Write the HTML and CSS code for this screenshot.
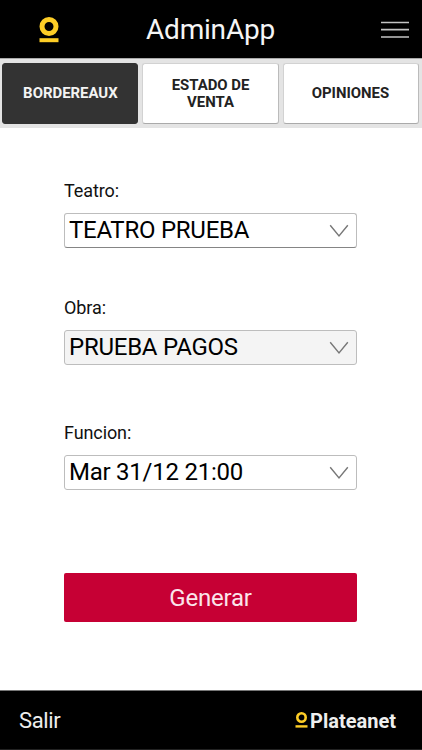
FILE: index.html
```html
<!DOCTYPE html>
<html lang="es">
<head>
<meta charset="utf-8">
<title>AdminApp</title>
<link rel="stylesheet" href="styles.css">
</head>
<body>
<div class="app">
  <header class="header">
    <svg class="logo" width="20" height="26" viewBox="0 0 20 26"><circle cx="10" cy="9.500" r="7" fill="none" stroke="#fdcd26" stroke-width="5"/><path d="M.5 21.200h19v4H.5z" fill="#fdcd26"/></svg>
    <h1 class="title"><span>AdminApp</span></h1>
    <svg class="menu" width="28" height="18" viewBox="0 0 28 18"><path d="M0 1.500h28M0 8.700h28M0 16h28" stroke="#c4c4c4" stroke-width="1.700"/></svg>
  </header>
  <nav class="tabs">
    <a class="tab active"><span>BORDEREAUX</span></a>
    <a class="tab"><span>ESTADO DE<br>VENTA</span></a>
    <a class="tab"><span>OPINIONES</span></a>
  </nav>
  <main class="form">
    <div class="field teatro">
      <div class="label"><span>Teatro:</span></div>
      <div class="select raised"><span>TEATRO PRUEBA</span><svg class="chevron" width="20" height="14" viewBox="0 0 20 14"><path d="M1.200 1.200 10 12l8.800-10.800" fill="none" stroke="#777" stroke-width="1.400"/></svg></div>
    </div>
    <div class="field obra">
      <div class="label"><span>Obra:</span></div>
      <div class="select filled"><span>PRUEBA PAGOS</span><svg class="chevron" width="20" height="14" viewBox="0 0 20 14"><path d="M1.200 1.200 10 12l8.800-10.800" fill="none" stroke="#777" stroke-width="1.400"/></svg></div>
    </div>
    <div class="field funcion">
      <div class="label"><span>Funcion:</span></div>
      <div class="select"><span>Mar 31/12 21:00</span><svg class="chevron" width="20" height="14" viewBox="0 0 20 14"><path d="M1.200 1.200 10 12l8.800-10.800" fill="none" stroke="#777" stroke-width="1.400"/></svg></div>
    </div>
    <div class="generate"><span>Generar</span></div>
  </main>
  <footer class="footer">
    <span class="exit">Salir</span>
    <div class="brand">
      <svg width="13" height="17" viewBox="0 0 13 17"><circle cx="6.500" cy="5.500" r="4.200" fill="none" stroke="#fdcd26" stroke-width="2.600"/><path d="M.5 13.200h12v2.400H.5z" fill="#fdcd26"/></svg>
      <span>Plateanet</span>
    </div>
  </footer>
</div>
</body>
</html>
```
FILE: styles.css
```css
* { box-sizing: border-box; }
body { margin: 0; background: #fff; font-family: Roboto, "Liberation Sans", sans-serif; color: #111; }
.app { width: 422px; height: 750px; display: flex; flex-direction: column; overflow: hidden; }
.header { height: 58px; flex: none; background: #000; display: flex; align-items: center; padding: 1px 13px 0 39px; }
.logo { flex: none; }
.title { flex: 1; margin: 0; padding-left: 87px; font-size: 28px; line-height: 34px; font-weight: 400; color: #f5f5f5; letter-spacing: -.2px; }
.menu { flex: none; }
.tabs { height: 70px; flex: none; background: #e4e4e4; border-top: 1px solid #aaa; padding: 4px 3px 4px 2px; display: grid; grid-template-columns: repeat(3, 1fr); gap: 4px; }
.tab { background: #fff; border: 1px solid #d2d2d2; border-bottom-color: #aaa; border-right-color: #bbb; border-radius: 3px; display: flex; align-items: center; justify-content: center; text-align: center; font-weight: 700; font-size: 14px; line-height: 16.500px; color: #222; }
.tab span { transform: scale(1.065, 1); }
.tab.active { background: #333; border-color: #333; color: #f4f4f4; }
.form { flex: 1; padding: 52px 65px 0 64px; }
.label { height: 22px; font-size: 18px; line-height: 22px; letter-spacing: -.1px; }
.select { margin-top: 11px; height: 35px; border: 1px solid #bdbdbd; border-radius: 3px; display: flex; align-items: center; justify-content: space-between; padding: 0 7px 0 4px; font-size: 24px; line-height: 28px; letter-spacing: -.25px; color: #000; }
.select span { padding-bottom: 2px; }
.select.raised { border-bottom-color: #858585; }
.select.filled { background: #f4f4f4; }
.obra { margin-top: 49px; }
.funcion { margin-top: 57px; }
.generate { margin-top: 83px; height: 49px; background: #c60034; border-radius: 2px; color: #fbe5eb; font-size: 24px; letter-spacing: -.2px; display: flex; align-items: center; justify-content: center; }
.footer { height: 60px; flex: none; background: #000; border-top: 1px solid #777; border-bottom: 1px solid #222; display: flex; align-items: center; justify-content: space-between; padding: 0 26px 0 19px; color: #eee; }
.exit { font-size: 22px; letter-spacing: -.4px; }
.brand { display: flex; align-items: center; gap: 2px; font-size: 20px; font-weight: 700; }
.brand span { padding-top: 2px; }
```
